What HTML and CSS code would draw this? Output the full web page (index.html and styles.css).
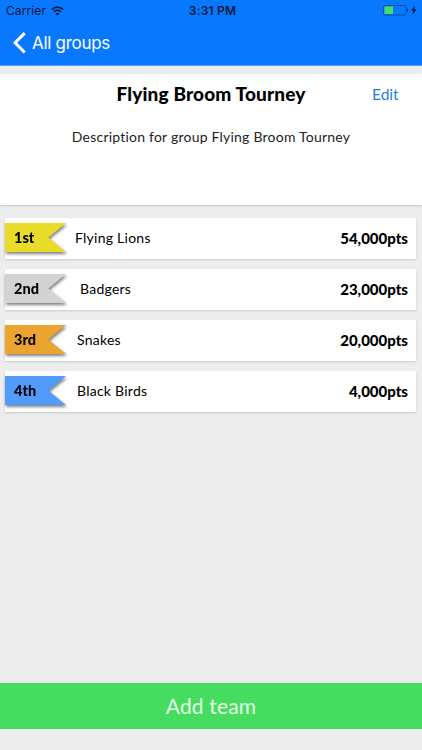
FILE: index.html
```html
<!DOCTYPE html>
<html lang="en">
<head>
    <meta charset="UTF-8">
    <meta name="viewport" content="width=device-width, initial-scale=1.0">
    <title>Flying Broom Tourney</title>
    <link rel="stylesheet" href="styles.css">
</head>
<body>
    <header class="navbar">
        <div class="status">
            <div class="carrier">
                <span>Carrier</span>
                <svg width="13" height="10" viewBox="0 0 13 10" fill="none" stroke="#06173a" stroke-width="1.6">
                    <path d="M0.8 3.5C4 0.3 9 0.3 12.2 3.5"/>
                    <path d="M2.9 5.8C5 3.8 8 3.8 10.1 5.8"/>
                    <path d="M6.5 9.4L4.5 7.4C5.6 6.4 7.4 6.4 8.5 7.4Z" fill="#06173a" stroke="none"/>
                </svg>
            </div>
            <span class="time">3:31 PM</span>
            <div class="power">
                <svg width="34" height="11" viewBox="0 0 34 11">
                    <rect x="0.5" y="0.5" width="22.5" height="9.5" rx="1.6" fill="none" stroke="#064eaf"/>
                    <rect x="1.5" y="1.5" width="8.5" height="7.5" fill="#4cdb66"/>
                    <path d="M24 3.6C25.4 4 25.4 6.6 24 7Z" fill="#06173a"/>
                    <path d="M32 0.7L28.2 5.8H30.5L29.4 10L33.6 4.5H31.2Z" fill="#06173a"/>
                </svg>
            </div>
        </div>
        <a class="back">
            <svg width="13" height="22" viewBox="0 0 13 22" fill="none" stroke="#fff" stroke-width="3">
                <path d="M11.7 1.1L2.1 10.8L11.7 20.5"/>
            </svg>
            <span>All groups</span>
        </a>
    </header>

    <section class="group">
        <div class="group-head">
            <h1>Flying Broom Tourney</h1>
            <a class="edit">Edit</a>
        </div>
        <p>Description for group Flying Broom Tourney</p>
    </section>

    <main class="teams">
        <div class="team">
            <div class="ribbon"><span class="first">1st</span></div>
            <span class="name lions">Flying Lions</span>
            <span class="points">54,000pts</span>
        </div>
        <div class="team">
            <div class="ribbon"><span class="second">2nd</span></div>
            <span class="name badgers">Badgers</span>
            <span class="points">23,000pts</span>
        </div>
        <div class="team">
            <div class="ribbon"><span class="third">3rd</span></div>
            <span class="name">Snakes</span>
            <span class="points">20,000pts</span>
        </div>
        <div class="team">
            <div class="ribbon"><span class="fourth">4th</span></div>
            <span class="name">Black Birds</span>
            <span class="points">4,000pts</span>
        </div>
    </main>

    <button class="add">Add team</button>
</body>
</html>
```
FILE: styles.css
```css
* {
    margin: 0;
    padding: 0;
    box-sizing: border-box;
}

body {
    height: 750px;
    padding-bottom: 21px;
    display: flex;
    flex-direction: column;
    background: #ededed;
    color: #000;
    font-family: Lato, sans-serif;
    font-variant-ligatures: none;
    overflow: hidden;
}

svg {
    display: block;
}

.navbar {
    height: 66px;
    background: #0879ff;
    border-bottom: 1px solid #5f9ff0;
    font-family: Inter, sans-serif;
}

.status {
    height: 21px;
    padding: 0 5px 0 6px;
    display: grid;
    grid-template-columns: 1fr auto 1fr;
    align-items: center;
    color: #06173a;
    font-size: 12px;
}

.carrier {
    display: flex;
    align-items: center;
    gap: 5px;
    letter-spacing: 0.1px;
}

.time {
    padding-left: 2px;
    font-weight: 600;
    letter-spacing: 0.2px;
}

.power {
    display: flex;
    justify-content: flex-end;
}

.back {
    height: 44px;
    padding-left: 13px;
    display: flex;
    align-items: center;
    gap: 6px;
    color: #fff;
    font-size: 17px;
    letter-spacing: -0.3px;
}

.group {
    height: 131px;
    margin-top: 8px;
    background: #fff;
    box-shadow: 0 1px 2px rgba(0, 0, 0, 0.18);
}

.group-head {
    height: 40px;
    display: grid;
    grid-template-columns: 93px 1fr 93px;
    align-items: center;
}

.group-head h1 {
    grid-column: 2;
    padding-bottom: 2px;
    font-size: 19px;
    font-weight: 900;
    letter-spacing: 0.15px;
    text-align: center;
    white-space: nowrap;
}

.edit {
    padding-left: 43px;
    padding-bottom: 1px;
    color: #1c7cf0;
    font-size: 15.5px;
}

.group p {
    padding-top: 14px;
    color: #222;
    font-size: 14px;
    letter-spacing: 0.22px;
    line-height: 18px;
    text-align: center;
}

.teams {
    padding: 13px 6px 0 5px;
    display: flex;
    flex-direction: column;
    gap: 10px;
}

.team {
    height: 41px;
    padding-right: 8px;
    padding-bottom: 2px;
    display: flex;
    align-items: center;
    background: #fff;
    box-shadow: 0 1px 2px rgba(0, 0, 0, 0.15);
    font-size: 15px;
}

.ribbon {
    width: 61px;
    filter: drop-shadow(1px 2px 1.5px rgba(0, 0, 0, 0.5));
}

.ribbon span {
    height: 29px;
    padding-left: 9px;
    display: block;
    clip-path: polygon(0 0, 100% 0, 71% 50%, 100% 100%, 0 100%);
    font-size: 14.5px;
    font-weight: 900;
    line-height: 30px;
}

.first {
    background: #e9dc28;
}

.second {
    background: #d5d2d6;
}

.third {
    background: #eba430;
}

.fourth {
    background: #509bfc;
}

.name {
    flex: 1;
    padding-left: 11px;
    font-size: 14px;
    letter-spacing: 0.25px;
}

.lions {
    padding-left: 9px;
}

.badgers {
    padding-left: 14px;
}

.points {
    font-weight: 900;
}

.add {
    height: 46px;
    margin-top: auto;
    padding-bottom: 2px;
    border: none;
    background: #46dc60;
    color: #e6ffeb;
    font-family: Lato, sans-serif;
    font-size: 21px;
    font-weight: 400;
    letter-spacing: 0.15px;
}
```
